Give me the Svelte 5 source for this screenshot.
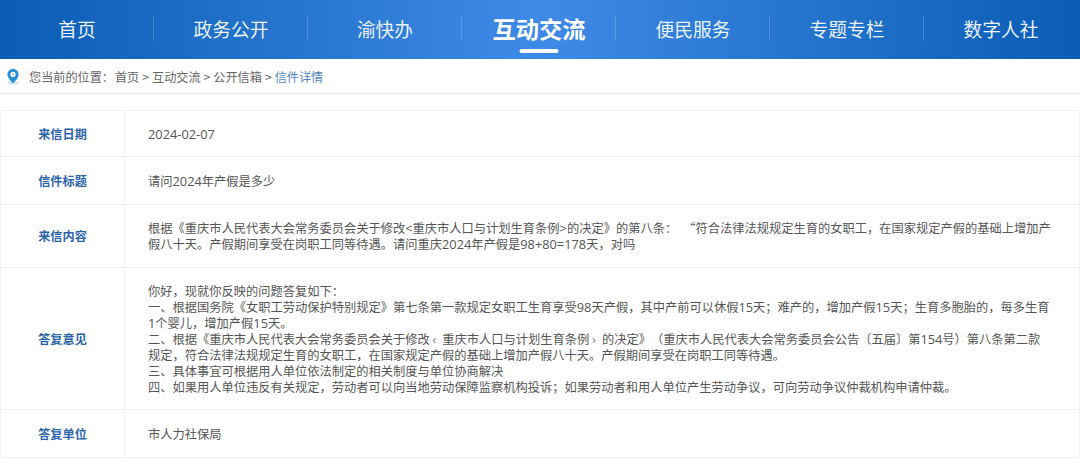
<script>
  const nav = [
    { label: '首页' },
    { label: '政务公开' },
    { label: '渝快办' },
    { label: '互动交流', active: true },
    { label: '便民服务' },
    { label: '专题专栏' },
    { label: '数字人社' }
  ];
  const crumbs = ['首页', '互动交流', '公开信箱'];
  const letter = [
    '根据《重庆市人民代表大会常务委员会关于修改<重庆市人口与计划生育条例>的决定》的第八条：\u2002“符合法律法规规定生育的女职工，在国家规定产假的基础上增加产',
    '假八十天。产假期间享受在岗职工同等待遇。请问重庆2024年产假是98+80=178天，对吗'
  ];
  const reply = [
    '你好，现就你反映的问题答复如下：',
    '一、根据国务院《女职工劳动保护特别规定》第七条第一款规定女职工生育享受98天产假，其中产前可以休假15天；难产的，增加产假15天；生育多胞胎的，每多生育',
    '1个婴儿，增加产假15天。',
    '二、根据《重庆市人民代表大会常务委员会关于修改 ‹\u2002重庆市人口与计划生育条例 ›\u2002的决定》（重庆市人民代表大会常务委员会公告〔五届〕第154号）第八条第二款',
    '规定，符合法律法规规定生育的女职工，在国家规定产假的基础上增加产假八十天。产假期间享受在岗职工同等待遇。',
    '三、具体事宜可根据用人单位依法制定的相关制度与单位协商解决',
    '四、如果用人单位违反有关规定，劳动者可以向当地劳动保障监察机构投诉；如果劳动者和用人单位产生劳动争议，可向劳动争议仲裁机构申请仲裁。'
  ];
  // Latin runs are set a little larger than the CJK text around them.
  const runs = (s) => s.split(/([0-9<>+=\-]+)/).map((text, i) => ({ text, latin: i % 2 === 1 }));
</script>

{#snippet mixed(s)}{#each runs(s) as r}{#if r.latin}<span class="latin">{r.text}</span>{:else}{r.text}{/if}{/each}{/snippet}

<header class="nav">
  {#each nav as item}
    <a class="nav-item" class:active={item.active} href="#top">{item.label}</a>
  {/each}
</header>

<div class="crumbs">
  <svg class="pin" viewBox="0 0 16 20" width="14" height="17" aria-hidden="true">
    <ellipse cx="8" cy="17.5" rx="6.5" ry="2" fill="#cfe3f5" />
    <path d="M8 1a6.6 6.6 0 0 0-6.6 6.6C1.400 12 8 18 8 18s6.600-6 6.600-10.400A6.600 6.600 0 0 0 8 1z" fill="#2b8fd8" />
    <circle cx="8" cy="7.500" r="3" fill="#fff" />
    <circle cx="8" cy="7.500" r="1.200" fill="#8cc8ef" />
  </svg>
  <span class="here">您当前的位置：</span>
  {#each crumbs as c}
    <span>{c}</span><span class="sep">&gt;</span>
  {/each}
  <span class="current">信件详情</span>
</div>

<section class="table">
  <div class="row r1">
    <div class="label">来信日期</div>
    <div class="value">{@render mixed('2024-02-07')}</div>
  </div>
  <div class="row r2">
    <div class="label">信件标题</div>
    <div class="value">{@render mixed('请问2024年产假是多少')}</div>
  </div>
  <div class="row r3">
    <div class="label">来信内容</div>
    <div class="value">
      {#each letter as line}<p>{@render mixed(line)}</p>{/each}
    </div>
  </div>
  <div class="row r4">
    <div class="label">答复意见</div>
    <div class="value">
      {#each reply as line}<p>{@render mixed(line)}</p>{/each}
    </div>
  </div>
  <div class="row r5">
    <div class="label">答复单位</div>
    <div class="value">市人力社保局</div>
  </div>
</section>

<style>
  :global(body) {
    margin: 0;
    background: #fff;
    font-family: "Noto Sans CJK SC", "Open Sans", sans-serif;
    text-spacing-trim: space-all;
    overflow: hidden;
  }
  .nav {
    height: 59px;
    box-sizing: border-box;
    padding-right: 2px;
    display: grid;
    grid-template-columns: repeat(7, 1fr);
    align-items: center;
    background: linear-gradient(90deg, #0a5cb4 0%, #3f8ae6 50%, #0a5cb4 100%);
  }
  .nav-item {
    position: relative;
    height: 59px;
    box-sizing: border-box;
    padding-bottom: 3px;
    display: flex;
    align-items: center;
    justify-content: center;
    color: #eaf2fc;
    font-size: 18.75px;
    text-decoration: none;
  }
  .nav-item:not(:last-child)::after {
    content: "";
    position: absolute;
    right: 0;
    top: 16px;
    height: 25px;
    width: 1px;
    background: rgba(255, 255, 255, 0.18);
  }
  .nav-item.active {
    color: #fff;
    font-size: 23.25px;
    font-weight: 700;
  }
  .nav-item.active::before {
    content: "";
    position: absolute;
    left: 50%;
    bottom: 6px;
    width: 39px;
    height: 4px;
    transform: translateX(-50%);
    background: #fff;
    border-radius: 2px;
  }
  .crumbs {
    height: 35px;
    box-sizing: border-box;
    border-bottom: 1px solid #e8e8e8;
    display: flex;
    align-items: center;
    padding-left: 6px;
    font-size: 12.15px;
    color: #666;
    gap: 3px;
  }
  .pin { margin-right: 6px; }
  .here { margin-right: -2px; }
  .sep { color: #666; }
  .current { color: #5585bd; }
  .table {
    margin-top: 16px;
    border-top: 1px solid #f1f1f1;
    border-right: 1px solid #f1f1f1;
    border-left: 1px solid #f1f1f1;
  }
  .row {
    display: grid;
    grid-template-columns: 124px 1fr;
    border-bottom: 1px solid #f1f1f1;
    font-size: 12.15px;
    line-height: 16px;
    color: #555;
  }
  .r1 { height: 45px; }
  .r2 { height: 47px; }
  .r3 { height: 62px; }
  .r4 { height: 141px; }
  .r5 { height: 47px; }
  .label {
    display: flex;
    align-items: center;
    justify-content: center;
    border-right: 1px solid #f1f1f1;
    color: #2c64ab;
    font-weight: 700;
  }
  .value {
    padding: 0 0 0 23px;
    align-self: center;
    font-size: 12.25px;
    white-space: nowrap;
  }
  .latin {
    font-family: "Open Sans", sans-serif;
    font-size: 12.8px;
    line-height: 1;
  }
  p { margin: 0; }
</style>
